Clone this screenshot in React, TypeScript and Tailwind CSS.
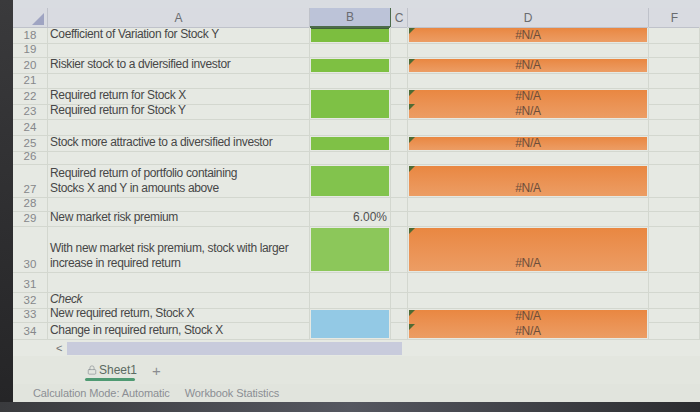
import type { ReactNode } from 'react';
import { Lock } from 'lucide-react';

const grid = 'border-r border-b border-[#d3d7cf]';
const cols = 'grid grid-cols-[35px_262px_81px_17px_241px_1fr]';

function Num({ n }: { n?: number }) {
  return (
    <div className={`flex items-end justify-center pb-px text-[11.5px] leading-[13px] text-[#85878a] ${grid}`}>
      {n}
    </div>
  );
}

function Blank() {
  return <div className={grid} />;
}

function Label({ children, italic }: { children?: ReactNode; italic?: boolean }) {
  return (
    <div
      className={`flex flex-col justify-end pl-[2px] pb-px text-[12px] leading-[15px] tracking-[-0.35px] text-[#474747] ${
        italic ? 'italic' : ''
      } ${grid}`}
    >
      {children}
    </div>
  );
}

function Fill({ color, span }: { color: string; span?: boolean }) {
  return (
    <div className={`${span ? 'row-span-2' : ''} ${grid} p-px`}>
      <div className="h-full w-full" style={{ background: color }} />
    </div>
  );
}

function Orange({ lines = 1, bottom, span }: { lines?: number; bottom?: boolean; span?: boolean }) {
  return (
    <div className={`${span ? 'row-span-2' : ''} ${grid} p-px`}>
      <div
        className={`relative flex h-full w-full flex-col items-center bg-gradient-to-b from-[#e98741] to-[#ec9d64] text-[12px] leading-[15px] tracking-[-0.3px] text-[#6c4e3b] ${
          bottom ? 'justify-end' : 'justify-center'
        }`}
      >
        <span className="absolute left-0 top-0 h-0 w-0 border-r-[6px] border-t-[6px] border-r-transparent border-t-[#4f6b34]" />
        {lines === 2 && (
          <span className="absolute left-0 top-1/2 h-0 w-0 border-r-[6px] border-t-[6px] border-r-transparent border-t-[#4f6b34]" />
        )}
        {Array.from({ length: lines }).map((_, i) => (
          <span key={i}>#N/A</span>
        ))}
      </div>
    </div>
  );
}

function EmptyRow({ n }: { n: number }) {
  return (
    <>
      <Num n={n} />
      <Blank />
      <Blank />
      <Blank />
      <Blank />
      <Blank />
    </>
  );
}

export default function App() {
  return (
    <div
      className="flex h-[412px] w-[700px] flex-col overflow-hidden bg-[#2a2a2c]"
      style={{ fontFamily: '"Liberation Sans", Arial, sans-serif' }}
    >
      <div className="flex flex-1">
        <div className="w-[13px] bg-gradient-to-b from-[#3a3a3c] to-[#252527]" />
        <div className="flex flex-1 flex-col bg-[#e6e9e3]">
          <div className="h-[8px] bg-[#d9dce1]" />

          {/* column headers */}
          <div className={`${cols} h-[19px] bg-[#d9dbe1] text-[12px] text-[#6a6c70]`}>
            <div className="relative border-r border-b border-[#bfc2ca]">
              <svg className="absolute bottom-[2px] right-[3px]" width="12" height="12" viewBox="0 0 12 12">
                <polygon points="12,0 12,12 0,12" fill="#9fa4c2" />
              </svg>
            </div>
            <div className="flex items-center justify-center border-r border-b border-[#bfc2ca]">A</div>
            <div className="flex items-center justify-center border-b-2 border-r border-[#4d6b4a] bg-[#bcc3d8]">B</div>
            <div className="flex items-center justify-center border-r border-b border-[#bfc2ca]">C</div>
            <div className="flex items-center justify-center border-r border-b border-[#bfc2ca]">D</div>
            <div className="flex items-center justify-center border-b border-[#bfc2ca]">F</div>
          </div>

          {/* cells */}
          <div
            className={`${cols} grid-rows-[17px_14px_16px_15px_16px_15px_16px_16px_13px_33px_14px_15px_46px_20px_16px_14px_17px]`}
          >
            <Num n={18} />
            <Label>Coefficient of Variation for Stock Y</Label>
            <div className={`${grid} p-px`}>
              <div className="h-full w-full border-t border-[#3f5f37] bg-[#7cbe3f]" />
            </div>
            <Blank />
            <Orange />
            <Blank />

            <EmptyRow n={19} />

            <Num n={20} />
            <Label>Riskier stock to a dviersified investor</Label>
            <Fill color="#7ec042" />
            <Blank />
            <Orange />
            <Blank />

            <EmptyRow n={21} />

            <Num n={22} />
            <Label>Required return for Stock X</Label>
            <Fill color="#7ec145" span />
            <Blank />
            <Orange lines={2} span />
            <Blank />

            <Num n={23} />
            <Label>Required return for Stock Y</Label>
            <Blank />
            <Blank />

            <EmptyRow n={24} />

            <Num n={25} />
            <Label>Stock more attractive to a diversified investor</Label>
            <Fill color="#7fc146" />
            <Blank />
            <Orange />
            <Blank />

            <EmptyRow n={26} />

            <Num n={27} />
            <Label>
              <span>Required return of portfolio containing</span>
              <span>Stocks X and Y in amounts above</span>
            </Label>
            <Fill color="#82c34d" />
            <Blank />
            <Orange bottom />
            <Blank />

            <EmptyRow n={28} />

            <Num n={29} />
            <Label>New market risk premium</Label>
            <div className={`flex items-end justify-end pr-[3px] pb-px text-[12px] leading-[15px] text-[#505050] ${grid}`}>
              6.00%
            </div>
            <Blank />
            <Blank />
            <Blank />

            <Num n={30} />
            <Label>
              <span>With new market risk premium, stock with larger</span>
              <span>increase in required return</span>
            </Label>
            <Fill color="#8cc75a" />
            <Blank />
            <Orange bottom />
            <Blank />

            <EmptyRow n={31} />

            <Num n={32} />
            <Label italic>Check</Label>
            <Blank />
            <Blank />
            <Blank />
            <Blank />

            <Num n={33} />
            <Label>New required return, Stock X</Label>
            <Fill color="#93c9e5" span />
            <Blank />
            <Orange lines={2} span />
            <Blank />

            <Num n={34} />
            <Label>Change in required return, Stock X</Label>
            <Blank />
            <Blank />
          </div>

          {/* horizontal scroll */}
          <div className="flex h-[16px] items-center">
            <span className="ml-[43px] w-[11px] text-[11px] leading-none text-[#707070]">&lt;</span>
            <div className="h-[13px] w-[335px] bg-[#c8cbdc]" />
          </div>

          {/* sheet tabs */}
          <div className="flex h-[28px] items-center bg-[#e3e6df]">
            <div className="relative ml-[72px] flex h-full items-center gap-[2px] px-[2px] text-[12px] text-[#5b6a62]">
              <Lock size={10} strokeWidth={1.6} className="text-[#8a8f94]" />
              <span>Sheet1</span>
              <span className="absolute bottom-[3px] left-0 h-[3px] w-[50px] rounded-full bg-[#4f9a72]" />
            </div>
            <span className="ml-[13px] text-[15px] font-light leading-none text-[#8a8c90]">+</span>
          </div>

          {/* status bar */}
          <div className="flex h-[18px] items-center gap-[15px] bg-[#e1e4dd] pl-[20px] text-[11px] tracking-[-0.1px] text-[#8b8e94]">
            <span>Calculation Mode: Automatic</span>
            <span>Workbook Statistics</span>
          </div>
        </div>
      </div>
      <div className="h-[10px] bg-gradient-to-r from-[#3a3b3e] via-[#555760] to-[#2c2d30]" />
    </div>
  );
}
